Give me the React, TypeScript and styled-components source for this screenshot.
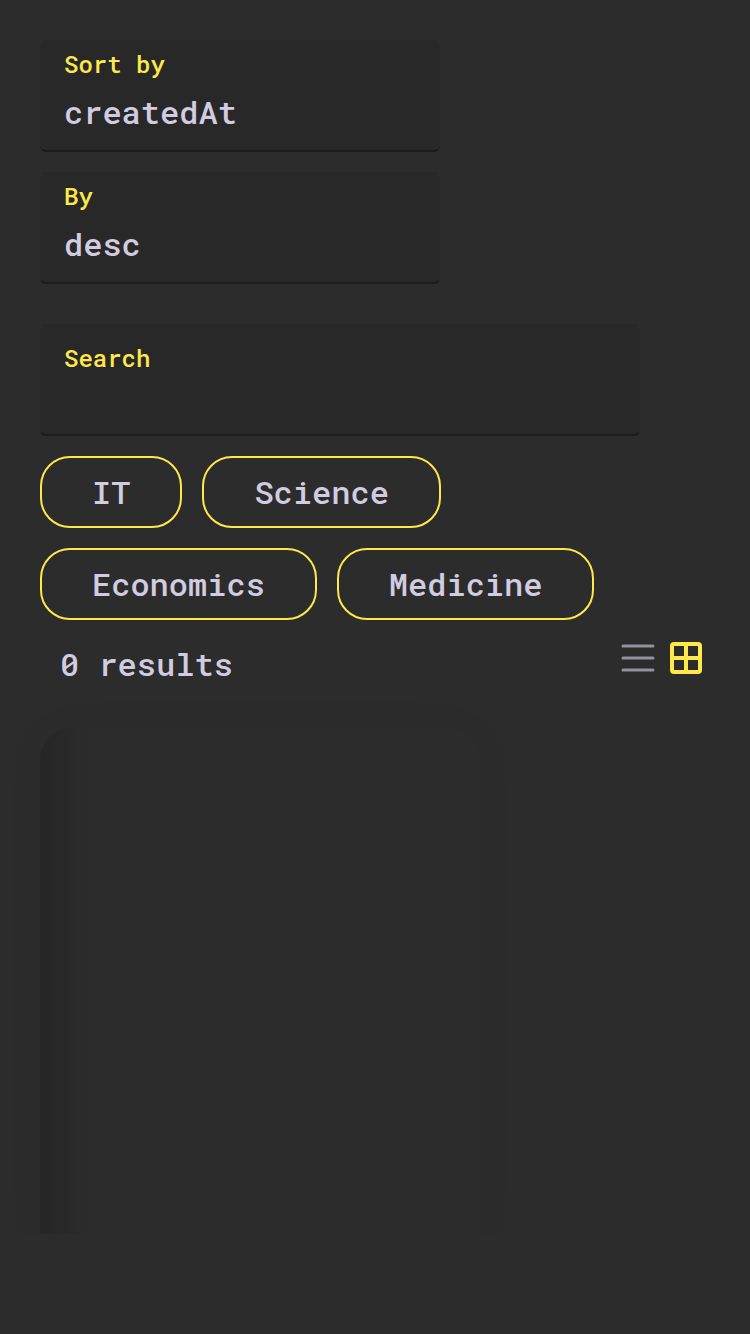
import React, { useState } from 'react';
import styled, { createGlobalStyle } from 'styled-components';

const colors = {
  page: '#2c2c2c',
  field: '#282828',
  line: '#1c1c1c',
  accent: '#ffe94a',
  text: '#d2cce0',
  muted: '#94909e',
};

const GlobalStyle = createGlobalStyle`
  *, *::before, *::after { box-sizing: border-box; }
  body {
    margin: 0;
    background: ${colors.page};
    color: ${colors.text};
    font-family: 'Roboto Mono', 'DejaVu Sans Mono', monospace;
    font-size: 32px;
    font-weight: 500;
  }
  button, input, select { font: inherit; color: inherit; }
`;

const Page = styled.main`
  display: flex;
  flex-direction: column;
  min-height: 100vh;
  padding: 40px 40px 100px;
`;

const SortFields = styled.div`
  display: flex;
  flex-direction: column;
  gap: 20px;
  margin-bottom: 40px;
`;

const Field = styled.div<{ $maxWidth: number; $labelTop: number }>`
  display: flex;
  flex-direction: column;
  width: 100%;
  max-width: ${({ $maxWidth }) => $maxWidth}px;
  height: 112px;
  padding: ${({ $labelTop }) => $labelTop}px 24px 0;
  background: ${colors.field};
  border-bottom: 2px solid ${colors.line};
  border-radius: 6px;
`;

const Label = styled.label`
  color: ${colors.accent};
  font-size: 24px;
  line-height: 32px;
`;

const controlReset = `
  appearance: none;
  width: 100%;
  margin: 0;
  padding: 0;
  border: 0;
  outline: 0;
  background: transparent;
`;

const Select = styled.select`
  ${controlReset}
  height: 48px;
  margin-top: 8px;
  line-height: 48px;
`;

const Input = styled.input`
  ${controlReset}
  height: 48px;
`;

const Tags = styled.div`
  display: flex;
  flex-wrap: wrap;
  gap: 20px;
  max-width: 600px;
  margin-top: 20px;
`;

const Tag = styled.button`
  height: 72px;
  padding: 0 50px;
  border: 2px solid ${colors.accent};
  border-radius: 30px;
  background: transparent;
  line-height: 68px;
  cursor: pointer;
`;

const ResultsBar = styled.div`
  display: flex;
  justify-content: space-between;
  align-items: flex-start;
  margin: 20px 0 40px;
  padding-left: 20px;
`;

const Count = styled.p`
  margin: 0;
  line-height: 48px;
`;

const ViewSwitch = styled.div`
  display: flex;
`;

const ViewButton = styled.button<{ $active: boolean }>`
  display: flex;
  width: 48px;
  height: 36px;
  padding: 0 6px;
  border: 0;
  background: transparent;
  color: ${({ $active }) => ($active ? colors.accent : colors.muted)};
  cursor: pointer;
`;

const ResultsPanel = styled.section`
  width: 100%;
  max-width: 440px;
  height: 506px;
  border-radius: 32px 32px 0 0;
  background: linear-gradient(to right, #262626, #292929 28px, ${colors.page} 48px);
  box-shadow: 0 0 40px rgba(0, 0, 0, 0.04);
  clip-path: inset(-40px -40px 0 -40px);
`;

const ListIcon = () => (
  <svg width="36" height="36" viewBox="0 0 36 36" fill="none" stroke="currentColor" strokeWidth="3" strokeLinecap="round" aria-hidden="true">
    <path d="M3 6H33M3 18H33M3 30H33" />
  </svg>
);

const GridIcon = () => (
  <svg width="36" height="36" viewBox="0 0 36 36" fill="none" stroke="currentColor" strokeWidth="4" aria-hidden="true">
    <rect x="4" y="4" width="28" height="28" rx="2" />
    <path d="M18 4V32M4 18H32" />
  </svg>
);

const topics = ['IT', 'Science', 'Economics', 'Medicine'];

export default function App() {
  const [view, setView] = useState<'list' | 'grid'>('grid');
  const [query, setQuery] = useState('');

  return (
    <>
      <GlobalStyle />
      <Page>
        <SortFields>
          <Field $maxWidth={400} $labelTop={8}>
            <Label htmlFor="sort">Sort by</Label>
            <Select id="sort" defaultValue="createdAt">
              <option>createdAt</option>
              <option>title</option>
            </Select>
          </Field>
          <Field $maxWidth={400} $labelTop={8}>
            <Label htmlFor="order">By</Label>
            <Select id="order" defaultValue="desc">
              <option>desc</option>
              <option>asc</option>
            </Select>
          </Field>
        </SortFields>
        <Field $maxWidth={600} $labelTop={18}>
          <Label htmlFor="search">Search</Label>
          <Input id="search" value={query} onChange={(e) => setQuery(e.target.value)} />
        </Field>
        <Tags>
          {topics.map((topic) => (
            <Tag key={topic} type="button">{topic}</Tag>
          ))}
        </Tags>
        <ResultsBar>
          <Count>0 results</Count>
          <ViewSwitch>
            <ViewButton type="button" aria-label="List view" $active={view === 'list'} onClick={() => setView('list')}>
              <ListIcon />
            </ViewButton>
            <ViewButton type="button" aria-label="Grid view" $active={view === 'grid'} onClick={() => setView('grid')}>
              <GridIcon />
            </ViewButton>
          </ViewSwitch>
        </ResultsBar>
        <ResultsPanel aria-label="Results" />
      </Page>
    </>
  );
}
